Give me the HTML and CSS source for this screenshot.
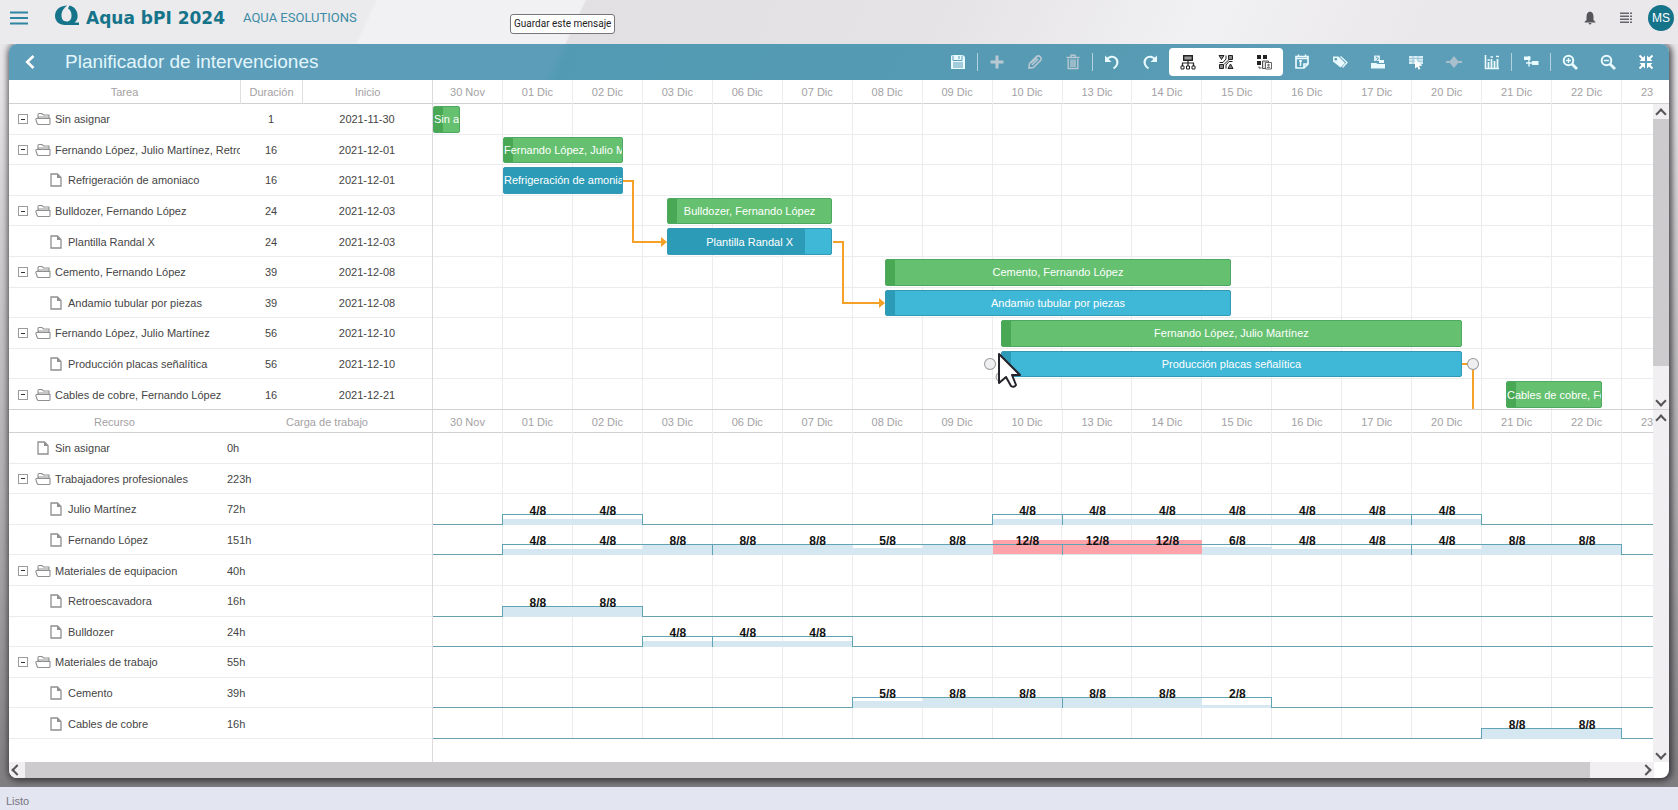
FILE: index.html
```html
<!DOCTYPE html>
<html lang="es">
<head>
<meta charset="utf-8">
<title>Planificador de intervenciones</title>
<link rel="stylesheet" href="styles.css">
</head>
<body>
<svg class="sprite" aria-hidden="true">
  <symbol id="i-folder" viewBox="0 0 16 14"><path d="M3 6V2.500Q3 1.500 4 1.500H7L8.500 3H14V6M1 6.500H15V11.500Q15 12.500 14 12.500H3.500Q2.500 12.500 2.200 11.500L.8 7.500Q.7 6.500 1.600 6.500M3 6.500Q3 5 4.500 5H14" fill="none" stroke="#8f8f8f" stroke-width="1.100"/></symbol>
  <symbol id="i-file" viewBox="0 0 12 14"><path d="M1 1H7.500L11 4.500V13H1Z" fill="#fff" stroke="#8f8f8f" stroke-width="1.300"/><path d="M7 1V5H11Z" fill="#8f8f8f"/></symbol>
</svg>

<header class="top">
  <button class="plain menu" aria-label="Menú"><svg width="18" height="14" viewBox="0 0 18 14"><path d="M0 1.500H18M0 7H18M0 12.500H18" stroke="#2f86a3" stroke-width="1.800"/></svg></button>
  <svg class="logo" width="26" height="22" viewBox="0 0 26 22" aria-hidden="true"><path d="M10 1C4 2 1 6 1 11C1 16 5 20 11 20H25V17.500H20.500C23 15.500 24 13 23.500 9.500C23 5 20 1.500 15.500 .5L14 3.500C16 4.500 17.500 7 17.500 10.500C17.500 14.500 15.500 16.500 12.500 16.500C9 16.500 7.500 13.500 7.500 10.500C7.500 6 10 3.500 13 .3Z" fill="#16748a"/></svg>
  <span class="brand">Aqua bPI 2024</span>
  <a class="company" href="#">AQUA ESOLUTIONS</a>
  <div class="user">
    <button class="plain" aria-label="Notificaciones"><svg width="12" height="14" viewBox="0 0 12 14"><path d="M6 .5C8.600 1 9.500 3 9.500 6V9L11.500 11V11.500H.5V11L2.500 9V6C2.500 3 3.400 1 6 .5ZM4.500 12H7.500Q7 13.500 6 13.500T4.500 12" fill="#55555a"/></svg></button>
    <button class="plain" aria-label="Lista"><svg width="12" height="12" viewBox="0 0 12 12"><path d="M0 1.200H9M0 4.200H9M0 7.200H9M0 10.200H9M10 1.200H12M10 4.200H12M10 7.200H12M10 10.200H12" stroke="#65656a" stroke-width="1.400"/></svg></button>
    <button class="avatar">MS</button>
  </div>
  <div class="tip" role="tooltip">Guardar este mensaje</div>
</header>

<main class="panel">
  <div class="bar">
    <button class="plain back" aria-label="Volver"><svg width="10" height="14" viewBox="0 0 10 14"><path d="M8.500 1L2.200 7L8.500 13" fill="none" stroke="#fff" stroke-width="2.600"/></svg></button>
    <h1>Planificador de intervenciones</h1>
    <div class="tools">
      <button aria-label="Guardar"><svg viewBox="0 0 16 16"><path d="M2 1H13L15 3V15H1V2Z" fill="#e9fbff"/><path d="M3 1.500V6.500H12V1.500M9 2V5M3 9H13M3 11H13M3 13H13" stroke="#5b9db8" fill="none"/></svg></button>
      <i class="sep"></i>
      <button class="off" aria-label="Añadir"><svg viewBox="0 0 16 16"><path d="M8 1.500V14.500M1.500 8H14.500" stroke="#b9c8d2" stroke-width="3"/></svg></button>
      <button class="off" aria-label="Editar"><svg viewBox="0 0 16 16"><path d="M2 14L2.500 9.500L9.500 2.500Q11.500 1 13.500 3Q15 5 13 7L6.500 13.500ZM5 11L11 5M4 9L10 3.500" fill="none" stroke="#b9c8d2" stroke-width="1.600"/></svg></button>
      <button class="off" aria-label="Eliminar"><svg viewBox="0 0 16 16"><path d="M1.500 3.500H14.500M6 3V1.200H10V3M3.200 5V14.500H12.800V5M6 5.500V13M8 5.500V13M10 5.500V13" fill="none" stroke="#b9c8d2" stroke-width="1.400"/></svg></button>
      <i class="sep"></i>
      <button aria-label="Deshacer"><svg viewBox="0 0 16 16"><path d="M2 6C5 2.500 9 1.500 12 4.500C15 8 13 12.500 9.500 14.500" fill="none" stroke="#e9fbff" stroke-width="2"/><path d="M1 1.500V8H7.500Z" fill="#e9fbff"/></svg></button>
      <button aria-label="Rehacer"><svg viewBox="0 0 16 16"><path d="M14 6C11 2.500 7 1.500 4 4.500C1 8 3 12.500 6.500 14.500" fill="none" stroke="#e9fbff" stroke-width="2"/><path d="M15 1.500V8H8.500Z" fill="#e9fbff"/></svg></button>
      <div class="group">
        <button aria-label="Jerarquía"><svg viewBox="0 0 16 16"><path d="M3.700 1.700H12.300V6.300H3.700Z" fill="#999" stroke="#222" stroke-width="1.400"/><path d="M8 6.500V12M2.500 12V9H13.500V12" fill="none" stroke="#222" stroke-width="1.200"/><path d="M1 12H4V15H1ZM6.500 12H9.500V15H6.500ZM12 12H15V15H12Z" fill="#fff" stroke="#222"/></svg></button>
        <button aria-label="Flujo"><svg viewBox="0 0 16 16"><path d="M1 1.500H6L3.500 5.500ZM10.500 1.500H14.500V5.500H10.500ZM1.500 10.500H5.500V14.500H1.500ZM10 14.500H15L12.500 10Z" fill="#888" stroke="#222"/><path d="M8 1.500V5L5 8.500H1.500M8 14.500V11L11 7.500H14.500M10.500 6L6 10.500" fill="none" stroke="#222"/></svg></button>
        <button aria-label="Recursos"><svg viewBox="0 0 16 16"><path d="M1 1H5V5H1ZM7 1H11V5H7ZM1 7H5V11H1Z" fill="#222"/><path d="M3 12.500V14H5.500M6.500 7H12.500V14.500H6.500Z" fill="#ddd" stroke="#555"/><path d="M9.500 8.500H15.500V15H9.500Z" fill="#fff" stroke="#666"/><path d="M10.500 14Q12.500 10.500 14.500 14Z" fill="#777"/><circle cx="12.500" cy="11" r="1.200" fill="#777"/></svg></button>
      </div>
      <button aria-label="Hoy"><svg viewBox="0 0 16 16"><path d="M2 2.500H14V10L10 14H2ZM2 4.500H14M10 14V10H14" fill="none" stroke="#e9fbff" stroke-width="1.700"/><path d="M4.500 .5V3M11.500 .5V3M6.500 6V12M5 7H8" stroke="#e9fbff" stroke-width="1.500"/></svg></button>
      <button aria-label="Etiquetas"><svg viewBox="0 0 16 16"><path d="M1 2.500H6.500L13 9L8.500 13.500L1 7.500Z" fill="#e9fbff"/><path d="M8.500 2.500L15 8.500L10.500 13.500" fill="none" stroke="#e9fbff" stroke-width="1.300"/><circle cx="3.800" cy="5.200" r="1.300" fill="#5b9db8"/></svg></button>
      <button aria-label="Asignar"><svg viewBox="0 0 16 16"><path d="M4 1.500H10V7H4Z" fill="#d8eef4"/><path d="M1 9H6L8 10H15V14.500H1Z" fill="#e9fbff"/><path d="M9 6H14V9H9Z" fill="#e9fbff"/><path d="M6 3L8.500 4.500L6.500 6.500" fill="none" stroke="#5b9db8"/></svg></button>
      <button aria-label="Seleccionar"><svg viewBox="0 0 16 16"><path d="M1 2H15V10H1Z" fill="#d8eef4"/><path d="M1 4.500H15M1 7.200H15M5 2V10M10 2V10" stroke="#8fbfd2" stroke-width=".8"/><path d="M7 5L14.500 11.500L11 12L12.500 15L10.500 15.500L9.500 12.800L7 14.500Z" fill="#fff"/></svg></button>
      <button class="off" aria-label="Hito"><svg viewBox="0 0 16 16"><path d="M8 2L13 8L8 14L3 8Z" fill="#a9bfcc"/><path d="M0 8H16" stroke="#a9bfcc" stroke-width="2"/></svg></button>
      <button aria-label="Histograma"><svg viewBox="0 0 16 16"><path d="M1.500 1V14.500H15" fill="none" stroke="#e9fbff" stroke-width="1.600"/><path d="M4.500 8V14M7.500 5V14M10.500 7V14M13.500 5V14" stroke="#e9fbff" stroke-width="1.800"/><path d="M3.500 6H6M6.500 3H9M12 2.500H15" stroke="#e9fbff" stroke-width="1.600"/></svg></button>
      <i class="sep"></i>
      <button aria-label="Dependencias"><svg viewBox="0 0 16 16"><path d="M1 2.500H7.500V6H1ZM9 7H15.500V11H9Z" fill="#e9fbff"/><path d="M6 2V12.500M3 9H9" stroke="#e9fbff" stroke-width="1.400"/></svg></button>
      <i class="sep"></i>
      <button aria-label="Acercar"><svg viewBox="0 0 16 16"><circle cx="6.500" cy="6.500" r="4.800" fill="none" stroke="#e9fbff" stroke-width="2"/><path d="M10 10L15 15" stroke="#e9fbff" stroke-width="2.800"/><path d="M4 6.500H9M6.500 4V9" stroke="#e9fbff" stroke-width="1.400"/></svg></button>
      <button aria-label="Alejar"><svg viewBox="0 0 16 16"><circle cx="6.500" cy="6.500" r="4.800" fill="none" stroke="#e9fbff" stroke-width="2"/><path d="M10 10L15 15" stroke="#e9fbff" stroke-width="2.800"/><path d="M4 6.500H9" stroke="#e9fbff" stroke-width="1.400"/></svg></button>
      <button aria-label="Contraer"><svg viewBox="0 0 16 16"><path d="M7 1.500V7H1.500ZM9 1.500V7H14.500ZM7 14.500V9H1.500ZM9 14.500V9H14.500Z" fill="#fff"/><path d="M1.500 1.500L6 6M14.500 1.500L10 6M1.500 14.500L6 10M14.500 14.500L10 10" stroke="#fff" stroke-width="2"/></svg></button>
    </div>
  </div>

  <section class="pane tasks">
    <table class="tree">
      <thead><tr><th>Tarea</th><th>Duración</th><th>Inicio</th></tr></thead>
      <tbody id="taskRows"></tbody>
    </table>
    <div class="chart">
      <div class="scale">
        <div class="dates"></div>
        <div class="canvas" id="taskCanvas"></div>
      </div>
    </div>
    <div class="vscroll"><span class="headgap"></span><span class="arrow up"></span><span class="thumb"></span><span class="arrow down"></span></div>
  </section>

  <section class="pane resources">
    <table class="tree">
      <thead><tr><th>Recurso</th><th>Carga de trabajo</th></tr></thead>
      <tbody id="resRows"></tbody>
    </table>
    <div class="chart">
      <div class="scale">
        <div class="dates"></div>
        <div class="canvas" id="resCanvas"></div>
      </div>
    </div>
    <div class="vscroll"><span class="arrow up"></span><span class="arrow down"></span></div>
  </section>

  <div class="hscroll"><span class="arrow left"></span><span class="track"><span class="thumb"></span></span><span class="arrow right"></span></div>
</main>

<footer class="status">Listo</footer>
<script src="app.js"></script>
</body>
</html>
```

FILE: styles.css
```css
* { box-sizing: border-box; }
body {
  margin: 0;
  height: 100vh;
  display: flex;
  flex-direction: column;
  font: 12px/16px "Liberation Sans", Arial, sans-serif;
  color: #454545;
  background: linear-gradient(#ebeaec 0, #e6e4e7 90px, #cfcdd0 240px, #b3b1b4 480px, #8f8d90 700px, #7b797c 100%);
  overflow: hidden;
}
button { border: 0; padding: 0; margin: 0; background: none; font: inherit; color: inherit; }
.sprite { display: none; }
.plain { display: flex; align-items: center; }

.top {
  position: relative;
  flex: 0 0 44px;
  display: flex;
  align-items: center;
  padding: 0 4px 8px 10px;
  background: linear-gradient(115deg, #ebeaec 0 340px, #f1f0f2 343px 530px, #e2e0e3 532px, #e5e3e6 860px, #f1f0f2 1100px, #eae8eb 1300px);
}
.menu { width: 18px; }
.logo { margin: 0 6px 4px 26px; }
.brand { font: bold 17px/20px "DejaVu Sans", sans-serif; color: #16748a; white-space: nowrap; }
.company { margin-left: 18px; color: #3c8ba6; text-decoration: none; font-family: Roboto, sans-serif; font-size: 13px; }
.user { margin-left: auto; display: flex; align-items: center; gap: 24px; }
.avatar {
  width: 26px; height: 26px;
  margin-left: -8px;
  border-radius: 50%;
  background: #16748a;
  color: #fff;
  font-size: 12px;
}
.tip {
  position: absolute;
  left: 510px; top: 14px;
  padding: 0 3px;
  border: 1px solid #77757a;
  border-radius: 3px;
  background: #fff;
  color: #222;
  font: 10px/18px Roboto, sans-serif;
  white-space: nowrap;
}

.panel {
  flex: 1;
  margin: 0 9px 9px;
  display: flex;
  flex-direction: column;
  min-height: 0;
  background: #fff;
  border-radius: 8px;
  overflow: hidden;
  box-shadow: 1px 1px 6px 2px rgba(40, 38, 42, .8);
}
.bar {
  flex: 0 0 36px;
  display: flex;
  align-items: center;
  padding: 0 4px 0 16px;
  color: #e2f6fc;
  background: linear-gradient(115deg, #5c9dba 0 500px, #529ab3 510px, #579bb3 1000px, #5c9db7 1200px);
}
.bar h1 { margin: 0 0 0 30px; font-size: 19px; line-height: 24px; font-weight: 400; }
.tools { margin-left: auto; display: flex; align-items: center; }
.tools button { width: 38px; height: 28px; display: flex; align-items: center; justify-content: center; }
.tools svg { width: 16px; height: 16px; }
.group { display: flex; border-radius: 4px; background: #fff; }
.sep { width: 1px; height: 18px; margin: 0; background: #b4d2de; }

.pane {
  display: grid;
  grid-template: 100% / 423px 1fr 16px;
  overflow: hidden;
  min-height: 0;
  font-size: 11px;
}
.tasks { flex: 0 0 329px; }
.resources { flex: 1; border-top: 1px solid #d2d0d3; }

.tree { display: block; border-collapse: collapse; }
.tree tr { display: grid; }
.tasks tr { grid-template-columns: 231px 62px 130px; }
.resources tr { grid-template-columns: 213px 210px; }
.tree thead tr { height: 24px; border-bottom: 1px solid #d2d0d3; }
.tree th { padding: 0; font-weight: 400; line-height: 24px; color: #a3a1a4; text-align: center; }
.tasks th + th { border-left: 1px solid #e0dee1; }
.resources .tree thead tr, .resources .dates { height: 23px; }
.resources th:first-child { padding-right: 2px; }
.tree tbody, .canvas { display: grid; grid-template-rows: repeat(10, 1fr); height: 306px; }
.tree tbody tr { border-bottom: 1px solid #ececee; }
.tree td { display: flex; align-items: center; padding: 1px 0 0; overflow: hidden; white-space: nowrap; }
.tasks td + td { justify-content: center; }
.resources td + td { padding-left: 5px; }
.toggle {
  flex: none;
  width: 10px; height: 10px;
  margin: 0 7px 0 9px;
  display: grid;
  place-items: center;
  border: 1px solid #9b9b9b;
}
.toggle::before { content: ""; width: 4px; height: 1px; background: #333; }
.folder { flex: none; width: 16px; height: 14px; margin-right: 4px; }
.file { flex: none; width: 12px; height: 14px; margin: 0 6px 0 41px; }
.file.root { margin-left: 28px; }

.chart { border-left: 1px solid #dcdadd; overflow: hidden; }
.scale { width: 103.2%; }
.dates, .load { display: grid; grid-template-columns: repeat(18, minmax(0, 1fr)); }
.dates { height: 24px; border-bottom: 1px solid #d2d0d3; }
.dates span { border-right: 1px solid #eeecef; line-height: 24px; text-align: center; color: #a3a1a4; }
.canvas {
  position: relative;
  background: repeating-linear-gradient(90deg, transparent 0 calc(100% / 18 - 1px), #ececee calc(100% / 18 - 1px) calc(100% / 18));
}
.line { position: relative; border-bottom: 1px solid #ececee; }

.task {
  position: absolute;
  top: 2px; bottom: 1px;
  border: 1px solid #4fa862;
  border-radius: 2px;
  background: #65c16f;
  color: #fff;
  overflow: hidden;
  display: flex;
  align-items: center;
  justify-content: center;
  white-space: nowrap;
}
.task.item { border-color: #3399b4; background: #3fb7d7; }
.task.cut { justify-content: flex-start; }
.task b { position: absolute; left: 0; top: 0; bottom: 0; width: 9px; background: #48a854; }
.task.item b { background: #2c9bb7; }
.task span { position: relative; }
.links { position: absolute; left: 0; top: 0; width: 100%; height: 100%; }
.links .route { fill: none; stroke: #f5a127; stroke-width: 2; vector-effect: non-scaling-stroke; }
.links .head { fill: #f5a127; }
.links .knob { fill: #efeef0; stroke: #9a989b; }
.links .pointer { fill: #fff; stroke: #26222a; stroke-width: 2; stroke-linejoin: round; }

.line.leaf { border-bottom: 0; }
.load { height: 100%; align-items: end; }
.cell { position: relative; height: 100%; border-bottom: 1px solid #6ba0b1; }
.cell.busy { height: 11px; border-bottom: 1px solid #d9e7ef; }
.cell.busy::before { content: ""; position: absolute; left: 0; right: 0; top: 0; height: 1px; z-index: 1; background: #5fa3b5; }
.cell.edge::after, .cell.end::after { content: ""; position: absolute; left: -1px; bottom: -1px; width: 1px; height: 11px; background: #5fa3b5; }
.fill { position: absolute; left: 0; right: 0; bottom: 0; background: #d5e8f1; }
.over .fill { background: #ffa3aa; }
.cell strong { position: absolute; z-index: 2; left: 0; right: 0; bottom: 5px; text-align: center; color: #111; font-size: 12px; line-height: 16px; }

.vscroll { display: flex; flex-direction: column; background: #f1eff2; }
.headgap { height: 24px; background: #fff; border-bottom: 1px solid #d2d0d3; }
.arrow { width: 16px; height: 15px; display: grid; place-items: center; }
.arrow::before { content: ""; width: 6px; height: 6px; border: solid #555; border-width: 2px 0 0 2px; }
.up::before { transform: translateY(2px) rotate(45deg); }
.down { margin-top: auto; }
.down::before { transform: translateY(-1px) rotate(225deg); }
.left::before { transform: rotate(-45deg); }
.right::before { transform: rotate(135deg); }
.vscroll .thumb { flex: 0 0 247px; background: #cdcbce; }
.hscroll { flex: 0 0 16px; display: flex; margin-right: 15px; background: #f1eff2; }
.track { flex: 1; display: flex; }
.track .thumb { width: 97%; background: #cdcbce; }

.status { flex: 0 0 23px; padding: 6px 6px 1px; background: #e3e5f1; color: #77757f; font-size: 11px; }
```

FILE: app.js
```javascript
const days = ["30 Nov", "01 Dic", "02 Dic", "03 Dic", "06 Dic", "07 Dic", "08 Dic", "09 Dic", "10 Dic",
  "13 Dic", "14 Dic", "15 Dic", "16 Dic", "17 Dic", "20 Dic", "21 Dic", "22 Dic", "23 Dic"];
const mondays = [4, 9, 14];

// start and end are measured in working-day columns
const tasks = [
  { name: "Sin asignar", hours: 1, date: "2021-11-30", start: 0, end: 0.38, group: true, cut: true },
  { name: "Fernando López, Julio Martínez, Retroescavadora", hours: 16, date: "2021-12-01", start: 1, end: 2.71, group: true, cut: true },
  { name: "Refrigeración de amoniaco", hours: 16, date: "2021-12-01", start: 1, end: 2.71, done: 100, cut: true },
  { name: "Bulldozer, Fernando López", hours: 24, date: "2021-12-03", start: 3.34, end: 5.71, group: true },
  { name: "Plantilla Randal X", hours: 24, date: "2021-12-03", start: 3.34, end: 5.71, done: 84 },
  { name: "Cemento, Fernando López", hours: 39, date: "2021-12-08", start: 6.46, end: 11.41, group: true },
  { name: "Andamio tubular por piezas", hours: 39, date: "2021-12-08", start: 6.46, end: 11.41 },
  { name: "Fernando López, Julio Martínez", hours: 56, date: "2021-12-10", start: 8.12, end: 14.71, group: true },
  { name: "Producción placas señalítica", hours: 56, date: "2021-12-10", start: 8.12, end: 14.71 },
  { name: "Cables de cobre, Fernando López", hours: 16, date: "2021-12-21", start: 15.34, end: 16.71, group: true, cut: true }
];

const resources = [
  { name: "Sin asignar", hours: "0h", root: true },
  { name: "Trabajadores profesionales", hours: "223h", group: true },
  { name: "Julio Martínez", hours: "72h", load: { 1: 4, 2: 4, 8: 4, 9: 4, 10: 4, 11: 4, 12: 4, 13: 4, 14: 4 } },
  { name: "Fernando López", hours: "151h", load: { 1: 4, 2: 4, 3: 8, 4: 8, 5: 8, 6: 5, 7: 8, 8: 12, 9: 12, 10: 12, 11: 6, 12: 4, 13: 4, 14: 4, 15: 8, 16: 8 } },
  { name: "Materiales de equipacion", hours: "40h", group: true },
  { name: "Retroescavadora", hours: "16h", load: { 1: 8, 2: 8 } },
  { name: "Bulldozer", hours: "24h", load: { 3: 4, 4: 4, 5: 4 } },
  { name: "Materiales de trabajo", hours: "55h", group: true },
  { name: "Cemento", hours: "39h", load: { 6: 5, 7: 8, 8: 8, 9: 8, 10: 8, 11: 2 } },
  { name: "Cables de cobre", hours: "16h", load: { 15: 8, 16: 8 } }
];

const label = row => row.group
  ? `<button class="toggle" aria-label="Contraer ${row.name}"></button><svg class="folder"><use href="#i-folder"/></svg>${row.name}`
  : `<svg class="file${row.root ? " root" : ""}"><use href="#i-file"/></svg>${row.name}`;

document.querySelectorAll(".dates").forEach(el => {
  el.innerHTML = days.map(d => `<span>${d}</span>`).join("");
});

document.getElementById("taskRows").innerHTML = tasks
  .map(t => `<tr><td>${label(t)}</td><td>${t.hours}</td><td>${t.date}</td></tr>`).join("");

const share = n => (n / days.length * 100).toFixed(2) + "%";

document.getElementById("taskCanvas").innerHTML = tasks.map(t => `
  <div class="line"><div class="task${t.group ? "" : " item"}${t.cut ? " cut" : ""}" style="left:${share(t.start)};width:${share(t.end - t.start)}">
    <b${t.done ? ` style="width:${t.done}%"` : ""}></b><span>${t.name}</span></div></div>`).join("") + `
  <svg class="links" viewBox="0 0 1259 306" preserveAspectRatio="none">
    <path class="route" d="M190 77H200V138H229M400 138H410V199H448M1029 260H1040V306"/>
    <path class="head" d="M228 133L234 138L228 143ZM446 194L452 199L446 204Z"/>
    <circle class="knob" cx="557" cy="260" r="5.500"/>
    <circle class="knob" cx="1040" cy="260" r="5.500"/>
    <circle class="knob" cx="567" cy="273" r="4"/>
    <path class="pointer" d="M566 250V279L573 273L578 282Q581 284 583 281L579 271H587Z"/>
  </svg>`;

document.getElementById("resRows").innerHTML = resources
  .map(r => `<tr><td>${label(r)}</td><td>${r.hours}</td></tr>`).join("");

document.getElementById("resCanvas").innerHTML = resources.map(r => {
  if (!r.load) return `<div class="line"></div>`;
  const cells = days.map((d, i) => {
    const h = r.load[i];
    const before = r.load[i - 1];
    if (!h) return `<div class="cell${before ? " end" : ""}"></div>`;
    const edge = !before || mondays.includes(i) ? " edge" : "";
    const over = h > 8 ? " over" : "";
    return `<div class="cell busy${edge}${over}"><div class="fill" style="height:${Math.round(h * 1.15)}px"></div><strong>${h}/8</strong></div>`;
  });
  return `<div class="line leaf"><div class="load">${cells.join("")}</div></div>`;
}).join("");
```
